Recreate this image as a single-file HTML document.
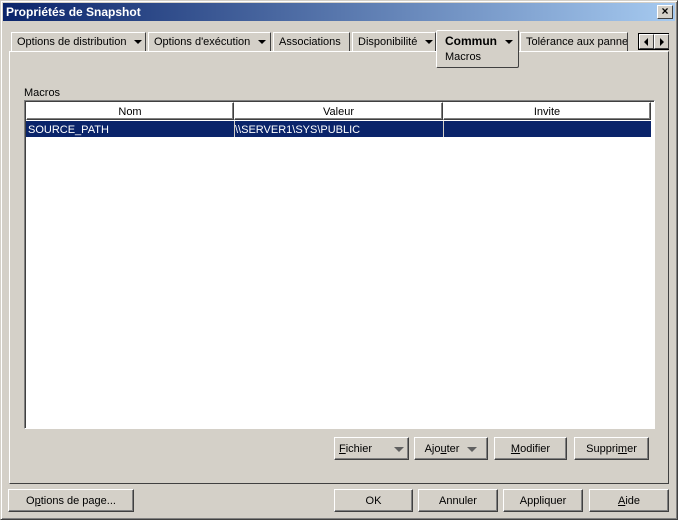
<!DOCTYPE html><html><head><style>
*{box-sizing:border-box}
body{margin:0;width:678px;height:520px;background:#d4d0c8;font:11px "Liberation Sans",sans-serif;color:#000;position:relative;overflow:hidden}
.a{position:absolute}
.win{left:0;top:0;width:678px;height:520px;border:1px solid;border-color:#d4d0c8 #404040 #404040 #d4d0c8;box-shadow:inset 1px 1px #fff,inset -1px -1px #808080}
.title{left:3px;top:3px;width:672px;height:18px;background:linear-gradient(90deg,#0a246a,#a6caf0);color:#fff;font-weight:bold;font-size:12px;line-height:19px;padding-left:3px}
.x{right:5px;top:5px;width:16px;height:14px;background:#d4d0c8;border:1px solid;border-color:#fff #404040 #404040 #fff;font-size:12px;line-height:11px;text-align:center;font-weight:bold;color:#000}
.tab{top:32px;height:19px;border:1px solid;border-color:#fff #404040 transparent #fff;border-bottom:none;line-height:19px;padding-left:5px;white-space:nowrap;overflow:hidden}
.panel{left:9px;top:51px;width:660px;height:433px;border:1px solid;border-color:#fff #404040 #404040 #fff}
.btn{height:23px;border:1px solid;border-color:#fff #404040 #404040 #fff;box-shadow:inset -1px -1px #808080;text-align:center;line-height:23px}
.tri{display:inline-block;border-left:4px solid transparent;border-right:4px solid transparent;border-top:4px solid #000;vertical-align:middle;margin-left:8px}
.hd{top:102px;height:18px;border:1px solid;border-color:#fff #404040 #404040 #fff;box-shadow:inset -1px -1px #808080;text-align:center;line-height:18px}
u{text-decoration:underline}
</style></head><body>
<div class="a win"></div>
<div class="a title">Propriétés de Snapshot</div>
<div class="a x">×</div>
<div class="a panel"></div>
<div class="a tab" style="left:11px;width:135px">Options de distribution<span class="tri"></span></div>
<div class="a tab" style="left:148px;width:123px">Options d'exécution<span class="tri"></span></div>
<div class="a tab" style="left:273px;width:77px">Associations</div>
<div class="a tab" style="left:352px;width:84px">Disponibilité<span class="tri"></span></div>
<div class="a" style="left:436px;top:30px;width:83px;height:38px;background:#d4d0c8;border:1px solid;border-color:#fff #404040 #404040 #fff;border-radius:2px;padding-left:8px;padding-top:3px;line-height:15px"><b style="font-size:12px">Commun</b><span class="tri"></span><br>Macros</div>
<div class="a tab" style="left:520px;width:108px">Tolérance aux panne</div>
<div class="a" style="left:638px;top:33px;width:31px;height:17px;border:1px solid #000;background:#d4d0c8"></div>
<div class="a btn" style="left:639px;top:34px;width:15px;height:15px;box-shadow:none"><span class="a" style="left:4px;top:3px;border-top:4px solid transparent;border-bottom:4px solid transparent;border-right:4px solid #000"></span></div>
<div class="a btn" style="left:654px;top:34px;width:15px;height:15px;box-shadow:none"><span class="a" style="left:5px;top:3px;border-top:4px solid transparent;border-bottom:4px solid transparent;border-left:4px solid #000"></span></div>
<div class="a" style="left:24px;top:86px;line-height:14px">Macros</div>
<div class="a" style="left:24px;top:100px;width:631px;height:329px;background:#fff;border:1px solid;border-color:#808080 #fff #fff #808080;box-shadow:inset 1px 1px #404040"></div>
<div class="a hd" style="left:26px;width:208px;line-height:19px">Nom</div>
<div class="a hd" style="left:234px;width:209px;line-height:19px">Valeur</div>
<div class="a hd" style="left:443px;width:208px;line-height:19px">Invite</div>
<div class="a" style="left:26px;top:121px;width:625px;height:16px;background:#0a246a;color:#fff;line-height:17px">
<span class="a" style="left:2px;top:1px">SOURCE_PATH</span><span class="a" style="left:209px;top:1px">\\SERVER1\SYS\PUBLIC</span>
<span class="a" style="left:208px;top:0;width:1px;height:16px;background:#d4d0c8"></span><span class="a" style="left:417px;top:0;width:1px;height:16px;background:#d4d0c8"></span></div>
<div class="a btn" style="left:334px;top:437px;width:75px;text-align:left;padding-left:4px"><u>F</u>ichier<span class="tri" style="margin-left:22px;border-top-color:#606060;border-width:5px 5px 0"></span></div>
<div class="a btn" style="left:414px;top:437px;width:74px">Ajo<u>u</u>ter<span class="tri" style="border-top-color:#606060;border-width:5px 5px 0"></span></div>
<div class="a btn" style="left:494px;top:437px;width:73px"><u>M</u>odifier</div>
<div class="a btn" style="left:574px;top:437px;width:75px">Suppri<u>m</u>er</div>
<div class="a btn" style="left:8px;top:489px;width:126px">O<u>p</u>tions de page...</div>
<div class="a btn" style="left:334px;top:489px;width:79px">OK</div>
<div class="a btn" style="left:418px;top:489px;width:80px">Annuler</div>
<div class="a btn" style="left:503px;top:489px;width:80px">Appliquer</div>
<div class="a btn" style="left:589px;top:489px;width:80px"><u>A</u>ide</div>
</body></html>
